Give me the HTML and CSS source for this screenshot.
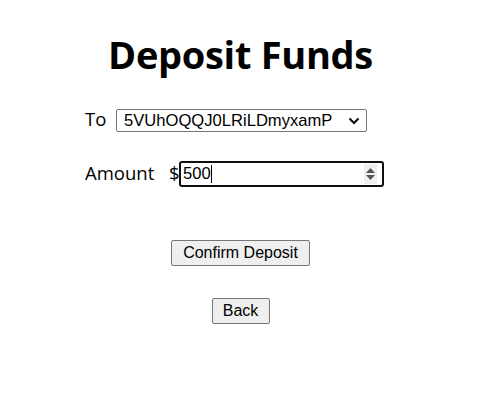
FILE: index.html
```html
<!DOCTYPE html>
<html>
<head>
<meta charset="utf-8">
<link rel="stylesheet" href="styles.css">
</head>
<body>
<div class="page">
  <h1 class="title">Deposit Funds</h1>
  <form class="form">
    <div class="row">
      <label class="label label-to">To</label>
      <div class="select">
        <span class="select-text">5VUhOQQJ0LRiLDmyxamP</span>
        <svg class="chev" width="12" height="8" viewBox="0 0 12 8"><path d="M1.5 1.5 L6 6 L10.5 1.5" fill="none" stroke="#000" stroke-width="2"/></svg>
      </div>
    </div>
    <div class="row row-amount">
      <label class="label label-amount">Amount</label>
      <span class="dollar">$</span>
      <div class="input">
        <span class="input-text">500</span><span class="caret"></span>
        <div class="spin">
          <svg width="11" height="16" viewBox="0 0 11 16"><path d="M5.5 2 L10 7 L1 7 Z" fill="#555"/><path d="M1 9 L10 9 L5.5 14 Z" fill="#555"/></svg>
        </div>
      </div>
    </div>
  </form>
  <div class="actions">
    <button class="btn btn-confirm" type="button">Confirm Deposit</button>
    <button class="btn btn-back" type="button">Back</button>
  </div>
</div>
</body>
</html>
```
FILE: styles.css
```css
html, body {
  margin: 0;
  padding: 0;
  background: #fff;
}
.page {
  width: 477px;
  height: 408px;
  display: flex;
  flex-direction: column;
  align-items: center;
  font-family: "Open Sans", sans-serif;
  color: #000;
}
.title {
  margin: 28px 0 0 4px;
  font-family: "Open Sans", sans-serif;
  font-weight: 700;
  font-size: 38px;
  line-height: 52px;
  letter-spacing: -0.3px;
}
.form {
  align-self: flex-start;
  margin-left: 85px;
  margin-top: 29px;
  display: flex;
  flex-direction: column;
}
.row {
  display: flex;
  align-items: center;
  height: 23px;
}
.row-amount {
  margin-top: 29px;
  height: 26px;
}
.label {
  font-family: "Open Sans", sans-serif;
  font-size: 18.5px;
  line-height: 23px;
  padding-bottom: 4px;
}
.label-to {
  width: 31px;
}
.label-amount {
  width: 84px;
}
.select {
  box-sizing: border-box;
  width: 251px;
  height: 23px;
  border: 1px solid #767676;
  border-radius: 2px;
  display: flex;
  align-items: center;
  padding: 0 6px 0 7px;
  font-family: "Liberation Sans", Arial, sans-serif;
  font-size: 16.6px;
}
.select-text {
  flex: 1;
}
.chev {
  display: block;
}
.dollar {
  font-family: "Open Sans", sans-serif;
  font-size: 18.5px;
  line-height: 23px;
  width: 10px;
  padding-bottom: 4px;
}
.input {
  box-sizing: border-box;
  width: 205px;
  height: 26px;
  border: 2px solid #101010;
  border-radius: 3px;
  display: flex;
  align-items: center;
  padding: 0 5px 0 2px;
  font-family: "Liberation Sans", Arial, sans-serif;
  font-size: 16.6px;
}
.input-text {
  line-height: 18px;
}
.caret {
  width: 1px;
  height: 18px;
  background: #000;
}
.spin {
  margin-left: auto;
  width: 13px;
  height: 20px;
  background: #efefef;
  display: flex;
  align-items: center;
  justify-content: center;
}
.spin svg {
  display: block;
}
.actions {
  margin-top: 53px;
  display: flex;
  flex-direction: column;
  align-items: center;
  gap: 32px;
}
.btn {
  box-sizing: border-box;
  height: 26px;
  padding: 0 10px;
  border: 1px solid #767676;
  border-radius: 2px;
  background: #efefef;
  font-family: "Liberation Sans", Arial, sans-serif;
  font-size: 16px;
  color: #000;
  margin-left: 4px;
}
.btn-confirm {
  width: 139px;
}
.btn-back {
  width: 58px;
}
```
